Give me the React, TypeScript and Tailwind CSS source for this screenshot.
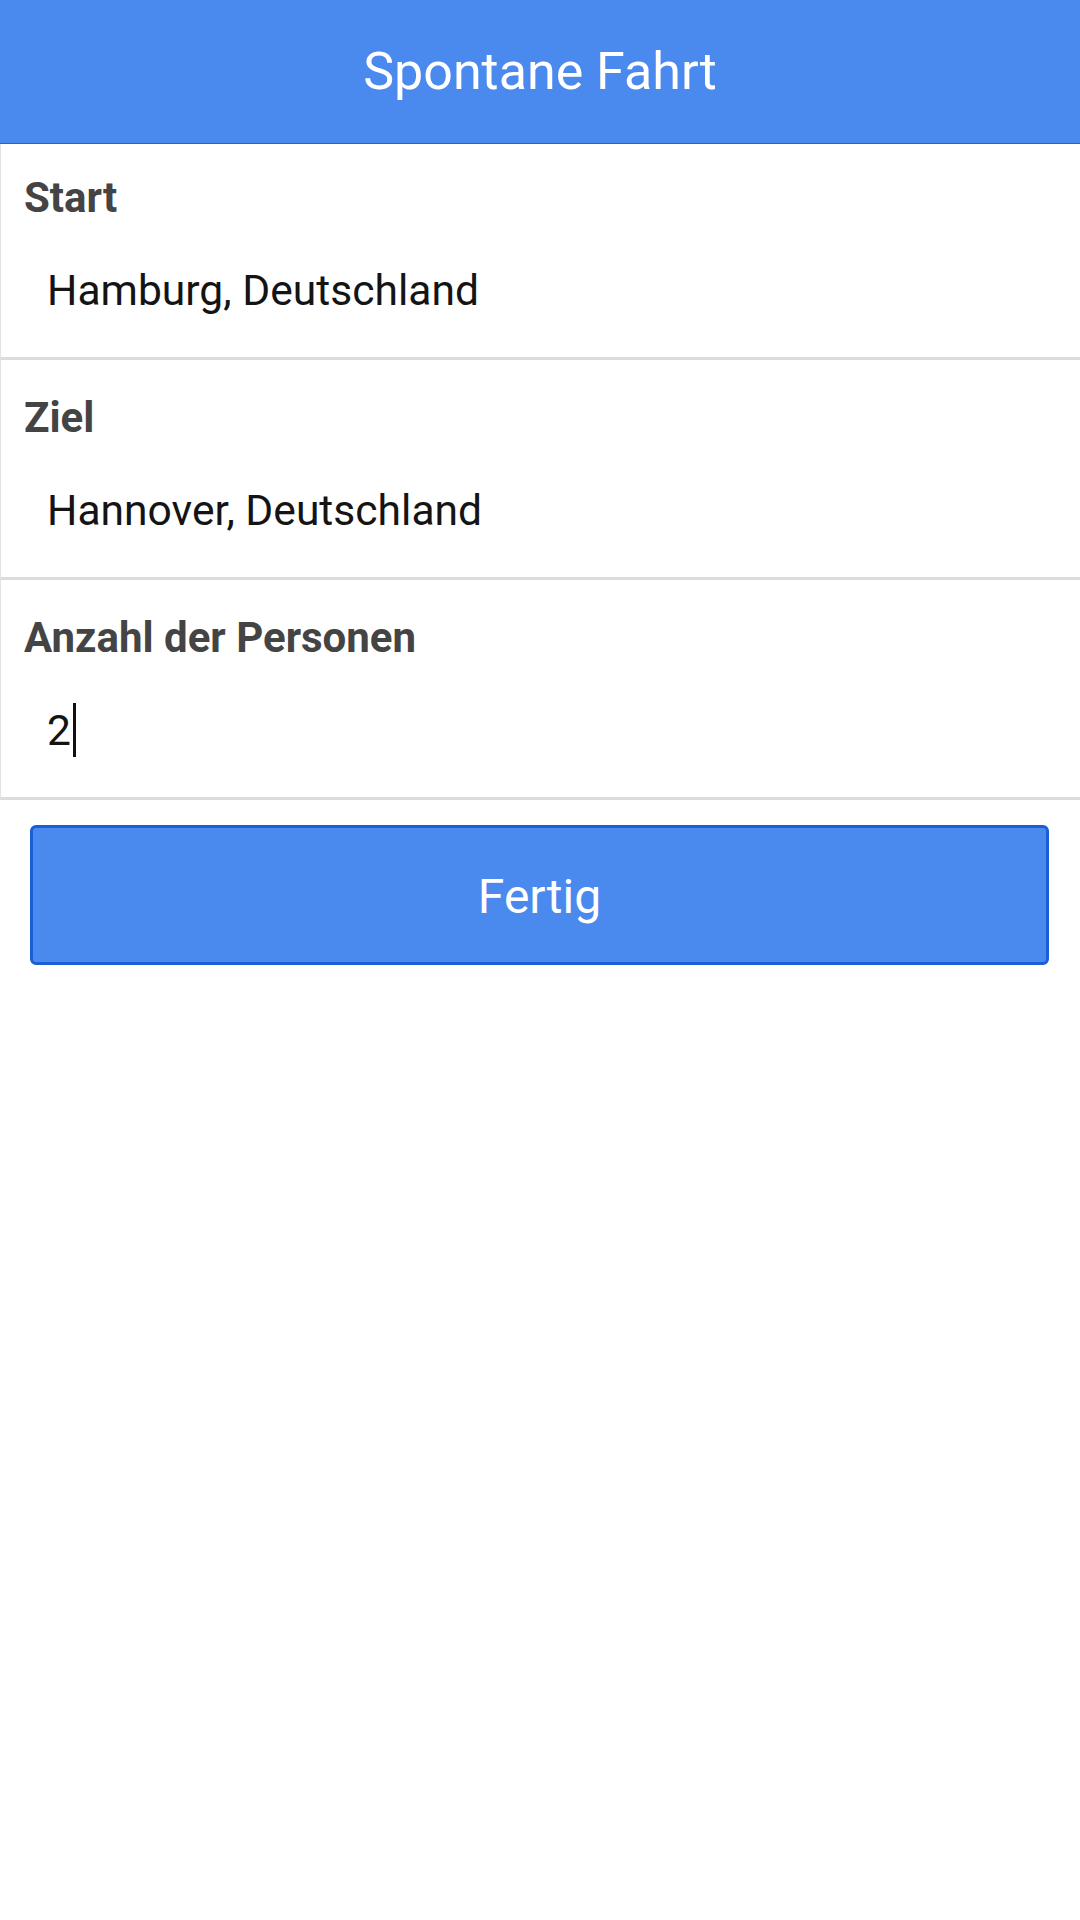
import React from "react";

interface FieldProps {
  label: string;
  value: string;
  first?: boolean;
  caret?: boolean;
}

const Field: React.FC<FieldProps> = ({ label, value, first, caret }) => {
  return (
    <div
      className={`border-l border-l-[#e2e2e2] border-b-[3px] border-b-[#dcdcdc] pb-[43px] ${
        first ? "pt-[30px]" : "pt-[34px]"
      }`}
    >
      <div className="pl-[23px] text-[42px] leading-[48px] font-bold text-[#444444]">
        {label}
      </div>
      <div className="mt-[44px] pl-[46px] text-[42.6px] leading-[48px] text-[#141414] h-[48px] whitespace-nowrap">
        {value}
        {caret && (
          <span className="inline-block w-[3px] h-[54px] -mt-[6px] ml-[2px] bg-[#111111] align-[-12px]" />
        )}
      </div>
    </div>
  );
};

export default function App() {
  return (
    <div className="w-[1080px] min-h-[1920px] bg-white font-['Roboto',_'Noto_Sans',_sans-serif]">
      {/* Header */}
      <div className="h-[144px] bg-[#4a89ed] border-b-[1.5px] border-b-[#1f63d6] flex items-center justify-center">
        <h1 className="text-[52px] leading-[60px] text-white font-normal">Spontane Fahrt</h1>
      </div>

      {/* Fields */}
      <div>
        <Field label="Start" value="Hamburg, Deutschland" first />
        <Field label="Ziel" value="Hannover, Deutschland" />
        <Field label="Anzahl der Personen" value="2" caret />
      </div>

      {/* Button */}
      <div className="pl-[30px] pr-[31px] pt-[25px]">
        <button className="w-full h-[140px] pt-[3px] rounded-[6px] bg-[#4a89ed] border-[3px] border-[#1a5fd6] text-white text-[48px] leading-[52px] font-normal">
          Fertig
        </button>
      </div>
    </div>
  );
}
